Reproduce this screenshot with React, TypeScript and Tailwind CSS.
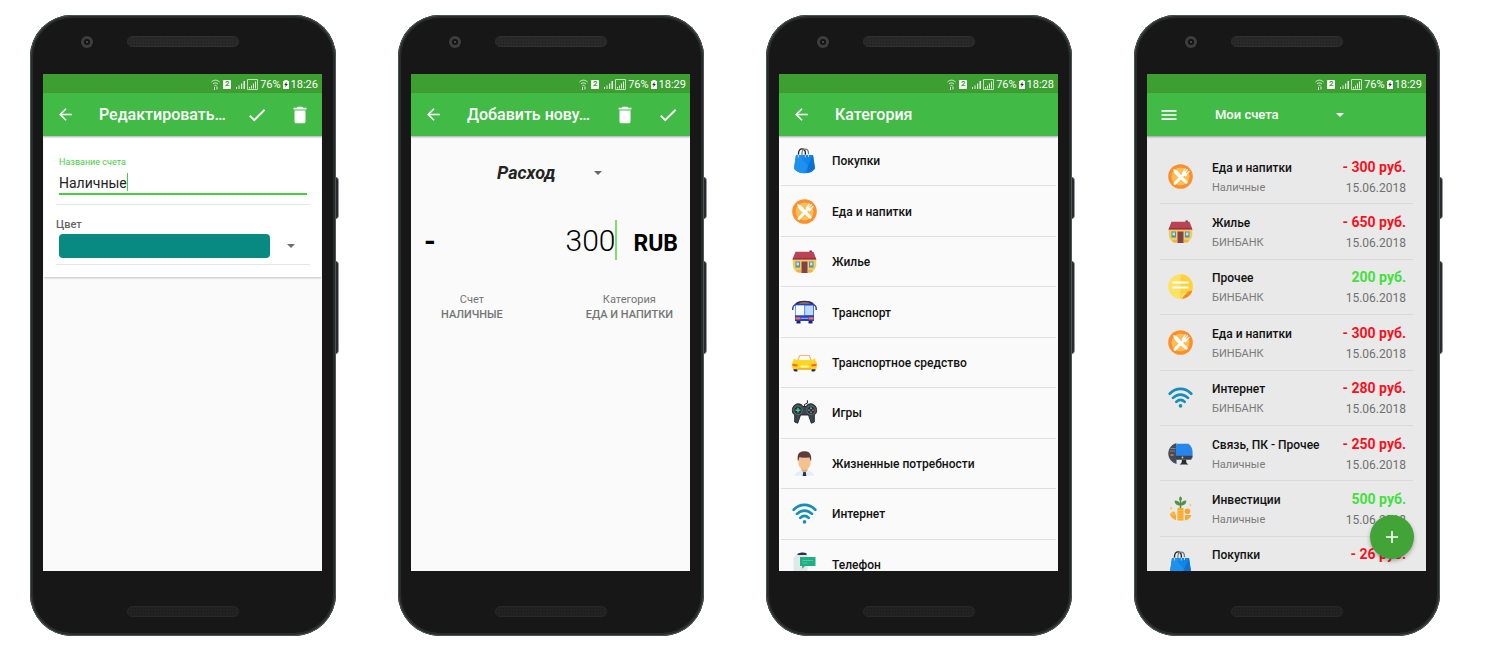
import React from "react";

type IconName =
  | "bag" | "food" | "house" | "bus" | "car" | "gamepad"
  | "person" | "wifi" | "phone" | "note" | "computer" | "invest";

const art: Record<IconName, React.ReactNode> = {
  bag: (
    <>
      <path d="M6.500 9V5.500C6.500 2.500 8 .9 10 .9s3.400 1.600 3.400 4.600V9" fill="none" stroke="#1b2026" strokeWidth="1.300" />
      <path d="M10 8V4.500C10.200 2.500 11.500 1.200 13.200 1.200c2 0 3.300 1.600 3.300 4.300V8" fill="none" stroke="#6e7b86" strokeWidth="1.200" />
      <path d="M4 7h17l2 13.500c-2.500 3.500-6.500 4.800-10.500 4.800S4.500 24 2 20.500z" fill="#0f86e8" />
      <path d="M4 7h8l-2 4 6 7-4 7.300C8 25.200 4.500 23.800 2 20.500z" fill="#1e90ee" />
      <path d="M16 18l5-11 2 13.500c-2 2.800-5 4.200-8 4.600z" fill="#0a72d2" />
      <path d="M6.500 6.500v3M13.300 6.500v3M16.500 6v3" stroke="#c9d3da" strokeWidth="1" />
    </>
  ),
  food: (
    <>
      <circle cx="12.500" cy="12.500" r="12.300" fill="#fd8f2d" />
      <circle cx="12.500" cy="12.500" r="9" fill="#fdbe55" />
      <path d="M5.400 5c2.800.4 5.400 2.800 7.200 5.400l6.900 7.200c1 1.100-.9 2.800-2 1.800l-7.400-6.300C7.800 11 5.200 8 5.400 5z" fill="#fff" />
      <path d="M15.500 10.200l3.800-4.600M17.400 11.300l3.700-3.900M14.600 9.300l2.600-4.500" stroke="#fff" strokeLinecap="round" fill="none" strokeWidth="1.200" />
      <path d="M6.900 19.500l8.100-8.500" stroke="#fff" strokeWidth="2.800" strokeLinecap="round" />
      <path d="M13.800 8.800l3.400 3.800 2.400-1.700-3.600-4z" fill="#fff" />
    </>
  ),
  house: (
    <>
      <path d="M17.500 1.500h2.400v3h-2.400z" fill="#4d3c4e" />
      <path d="M.8 10h23.400v6.500c-.8 3.500-3 6-5.500 7.500H6.300C3.500 22.500 1.400 20 .8 16.500z" fill="#f3cb57" />
      <path d="M3.500 2.800h18l3 8H.3z" fill="#b84457" />
      <path d="M1 9.400h23" stroke="#963247" strokeWidth="1" />
      <path d="M9.500 12.500h6V24h-6z" fill="#83404d" />
      <path d="M3.500 12.500h4.500v6H3.500zM17 12.500h4.500v6H17z" fill="#4f91ac" />
      <path d="M4.500 13.500h2.500v3H4.500zM18 13.500h2.500v3H18z" fill="#bce6f2" />
      <path d="M4.500 22h5M15.500 22h5" stroke="#df9a57" strokeWidth="1.200" />
    </>
  ),
  bus: (
    <>
      <path d="M4 4.500C1.300 5 .7 6.300.7 10M21 4.500c2.700.5 3.300 1.800 3.300 5.500" fill="none" stroke="#29429d" strokeWidth="1.500" />
      <path d="M4.500 19h4v4.500h-4zM16.500 19h4v4.500h-4z" fill="#1b2467" />
      <path d="M3 4C4.500 1.800 8 1 12.500 1s8 .8 9.500 3v17H3z" fill="#293ebd" />
      <path d="M3.500 4C5 1.500 8 .8 12.500.8S20 1.500 21.500 4z" fill="#252f6a" />
      <path d="M6 3.500C8 2 17 2 19 3.500z" fill="#e5a342" />
      <path d="M3.700 5.500h17.600v9.700H3.700z" fill="#b9dcff" />
      <path d="M3.700 5.500h8.300v9.700H3.700z" fill="#f2f8ff" />
      <path d="M12.700 5.500v9.700" stroke="#4b75d2" strokeWidth=".8" />
      <path d="M3.500 17.300h5v2.200h-5zM16.500 17.300h5v2.200h-5z" fill="#ff7146" />
      <path d="M9 18.300h7" stroke="#8db5fa" strokeWidth="1.200" />
    </>
  ),
  car: (
    <>
      <path d="M5.500 11l2.200-5.500h9.600l2.200 5.500z" fill="#fff9ed" stroke="#f4b583" strokeWidth="1.200" />
      <path d="M1.500 17h4v4.300c-2 .6-3.500.1-4-1zM19.500 17h4v3.300c-.5 1.100-2 1.600-4 1z" fill="#222763" />
      <path d="M1.800 8.200l3 2h15.400l3-2 .2 2.400c1 .8 1.400 2 1.400 3.500v4.200l-1.300.9H1.500l-1.300-.9v-4.200c0-1.500.4-2.700 1.400-3.500z" fill="#fed61b" />
      <path d="M.4 13.800l5.300.8-.3 2-4.900-.5zM24.600 13.800l-5.300.8.300 2 4.900-.5z" fill="#ff5e43" />
      <path d="M8.500 15.500h8v2h-8z" fill="#fff6b0" />
      <path d="M6 19h13" stroke="#e9a514" strokeWidth="1.300" />
    </>
  ),
  gamepad: (
    <>
      <path d="M12.400 7V4.500l3-1.300V.3" fill="none" stroke="#1d242a" strokeWidth="1" />
      <path d="M6 3.800c2.300-.2 4.300 1.200 5 2.700h3c.7-1.500 2.700-2.900 5-2.700 3.600.3 5.800 3.200 5.600 7-.1 2-.8 3.200-2.300 4.200v7l-3 1.200-2.800-8.200h-8l-2.800 8.200-3-1.200v-7C1.200 14 .5 12.800.4 10.800.2 7 2.400 4.100 6 3.800z" fill="#3b454f" stroke="#1b2127" strokeWidth=".9" />
      <circle cx="6" cy="10.200" r="4.200" fill="#252e36" stroke="#798690" strokeWidth=".7" />
      <circle cx="19" cy="10.200" r="4.200" fill="#252e36" stroke="#798690" strokeWidth=".7" />
      <path d="M6 7.800v4.800M3.600 10.200h4.800" stroke="#3fd37f" strokeWidth="1.500" />
      <circle cx="19" cy="8.200" r=".9" fill="#5bd58a" />
      <circle cx="17" cy="10.200" r=".9" fill="#4e9de2" />
      <circle cx="21" cy="10.200" r=".9" fill="#ef5a51" />
      <circle cx="19" cy="12.200" r=".9" fill="#c9822f" />
    </>
  ),
  person: (
    <>
      <path d="M9.500 16h6v5l-3 2-3-2z" fill="#e0aa72" />
      <path d="M2.500 24.800c.7-3 3.500-4.500 7-5l3 2.200 3-2.200c3.500.5 6.300 2 7 5z" fill="#e6ecf8" />
      <path d="M11.300 21h2.400l.7 4h-3.800z" fill="#263457" />
      <path d="M6.500 7h12v5.500c0 3.500-3.300 6.500-6 6.500s-6-3-6-6.500z" fill="#f4c38d" />
      <path d="M6 10.500C5 5 5.800.5 12 .3c6.500-.5 8 4.700 7 10.200l-1.500-4c-3.500.5-7.500.5-10-.3z" fill="#5f3b3a" />
    </>
  ),
  wifi: (
    <g fill="none" stroke="#188dbc" strokeWidth="2.700" strokeLinecap="round">
      <path d="M1.700 8.700C8 2.300 17 2.300 23.300 8.700M5 12.900c4.400-4.500 10.600-4.500 15 0M8.300 16.900c2.600-2.600 5.800-2.600 8.400 0" />
      <circle cx="12.500" cy="20.900" r="1.800" fill="#188dbc" stroke="none" />
    </g>
  ),
  phone: (
    <>
      <path d="M1.500 5.500l4-3.500h10v23h-14z" fill="#e2e7ea" />
      <path d="M5.500 2C7.500.3 12 0 14.500 1.200V3h-9z" fill="#27334e" />
      <path d="M8 5h15.500v9H13l-2.800 2.700V14H8z" fill="#1eaf83" />
      <path d="M10.500 8.500h10.500M10.500 11h5" stroke="#55c9a2" strokeWidth="1" />
    </>
  ),
  note: (
    <>
      <circle cx="12.500" cy="12.500" r="12.300" fill="#ffe164" />
      <path d="M12.500.2a12.300 12.300 0 0 1 11.800 15.700l-7.200 8a12.300 12.300 0 0 1-4.600.9z" fill="#ffd13b" />
      <path d="M14 24.700c.5-4.500 4-7.700 10.300-8.300-1.200 4.500-5 8-10.300 8.300z" fill="#f78a15" />
      <path d="M14 24.500c-.5-3 .2-4.500 2.500-5.500 1.500-.6 5.500-.8 7.800-2.600-4.500 1.100-7.800 4.100-10.300 8.100z" fill="#ffe88a" />
      <path d="M4.500 8.500h16M4.500 13.500h16" stroke="#fff" strokeWidth="2.200" />
    </>
  ),
  computer: (
    <>
      <path d="M8.500 2v21C3.500 21.500.3 17.500.3 12.500S3.500 3.500 8.500 2z" fill="#414b59" />
      <path d="M2.500 7.500h5M1.700 10h5.500" stroke="#7b8897" strokeWidth="1" />
      <path d="M2.500 14h3" stroke="#ef782f" strokeWidth="1.500" />
      <path d="M9.500 2.800h11c2.700 2 4.100 5 4.100 8.700v5.500H8V4.300z" fill="#2786ed" />
      <path d="M8 14.700h16.400c-.2 1.500-.6 2.800-1.200 4H9c-.7 0-1-.4-1-1z" fill="#384350" />
      <path d="M14 18.700h4l.5 3.300 2 1.500h-9l2-1.500z" fill="#242c36" />
      <circle cx="14.500" cy="16.500" r=".9" fill="#f5cf45" />
    </>
  ),
  invest: (
    <>
      <path d="M12.500 12V5" stroke="#4b8b43" strokeWidth="1.500" />
      <path d="M12.500 9.500C8.500 9.500 6.500 7.500 6.700 4.500c3.500 0 5.500 1.500 5.800 5zM12.500 9.500c4 0 6-2 5.800-5-3.500 0-5.500 1.500-5.800 5zM12.500 5.500c-2-1.500-2-3.500 0-5.200 2 1.700 2 3.700 0 5.200z" fill="#4f9344" />
      <path d="M9.500 12h6v12.500h-6zM17 19h6.500c-.8 2.500-3 5-6.500 5.500zM1.800 17.500l6.200 1.300v5.500C4.700 23 2.300 20.500 1.800 17.500z" fill="#faa92a" />
      <circle cx="19.500" cy="15.300" r="2.800" fill="#f9a62a" />
      <circle cx="5.300" cy="17.600" r="2.200" fill="#fcb63d" />
      <path d="M9 14.500h7M9 17.200h7M9 19.900h7M9 22.500h7" stroke="#fdc45c" strokeWidth=".7" />
      <path d="M2 12.500l1-2 1 2-1 1zM21.500 9l1-1.500 1 1.500-1 1z" fill="#fcc04b" />
    </>
  ),
};

function CategoryIcon({ name }: { name: IconName }) {
  return (
    <svg viewBox="0 0 25 25" className="size-[25px] shrink-0 overflow-visible" aria-hidden="true">
      {art[name]}
    </svg>
  );
}

function Glyph({ d, className }: { d: string; className: string }) {
  return (
    <svg viewBox="0 0 24 24" fill="currentColor" className={className} aria-hidden="true">
      <path d={d} />
    </svg>
  );
}

const BACK = "M20 11H7.830l5.590-5.590L12 4l-8 8 8 8 1.410-1.410L7.830 13H20v-2z";
const CHECK = "M9 16.170L4.830 12l-1.420 1.410L9 19 21 7l-1.410-1.410z";
const TRASH = "M6 19c0 1.100.9 2 2 2h8c1.100 0 2-.9 2-2V7H6v12zM19 4h-3.500l-1-1h-5l-1 1H5v2h14V4z";
const MENU = "M3 18h18v-2H3v2zm0-5h18v-2H3v2zm0-7v2h18V6H3z";

function Caret({ className }: { className: string }) {
  return (
    <svg viewBox="0 0 8 4" fill="currentColor" className={`pointer-events-none h-1 w-2 shrink-0 ${className}`} aria-hidden="true">
      <path d="M0 0h8L4 4z" />
    </svg>
  );
}

function StatusBar({ time }: { time: string }) {
  return (
    <div className="flex h-[19px] shrink-0 items-center justify-end bg-[#3d9f32] pr-1 pt-px text-[11px] leading-none text-white">
      <svg viewBox="0 0 9 11" className="mr-[3px] h-[11px] w-[9px]" fill="none" stroke="#dff2db" aria-hidden="true">
        <path d="M.5 3c2.500-2.400 5.500-2.400 8 0M2 5c1.600-1.500 3.400-1.500 5 0M3.400 6.800c.7-.6 1.500-.6 2.200 0" />
        <path d="M3.500 11V8M6 7.500v3" />
      </svg>
      <span className="mr-[5px] flex h-[9px] w-2 items-center justify-center rounded-[1px] bg-white text-[8px] font-bold text-[#3d9f32]">2</span>
      <svg viewBox="0 0 22 11" className="mr-0.5 h-[11px] w-[22px]" aria-hidden="true">
        <path d="M0 8h1v2H0zM2.500 6.500h1V10h-1zM5 4.500h1.200V10H5zM7.500 2h1.500v8H7.500z" fill="#e6f5e3" />
        <path d="M11.500.5h10v10h-10z" fill="none" stroke="#bfe2b9" />
        <path d="M13 8h1v1.500h-1zM15 6.500h1v3h-1zM17 4.500h1v5h-1zM19 2.500h1v7h-1z" fill="#e6f5e3" />
      </svg>
      <span>76%</span>
      <svg viewBox="0 0 6 9" className="mx-0.5 h-[9px] w-1.5" aria-hidden="true">
        <path d="M1.500 0h3v1H6v8H0V1h1.500z" fill="#fff" />
        <path d="M3.700 1.800L1.200 5h1.500l-.5 2.500L4.800 4H3.300z" fill="#1c3517" />
      </svg>
      <span>{time}</span>
    </div>
  );
}

function AppBar({ title, actions = [] }: { title: string; actions?: ("check" | "trash")[] }) {
  return (
    <header className="relative z-10 flex h-[43px] shrink-0 items-center bg-[#42bb46] pl-[13px] pr-[11px] text-white shadow-[0_1px_2px_rgba(0,0,0,0.35)]">
      <button type="button" aria-label="Назад">
        <Glyph d={BACK} className="size-[19px]" />
      </button>
      <h1 className="ml-6 min-w-0 flex-1 whitespace-nowrap pt-px text-base font-medium">{title}</h1>
      <div className="flex shrink-0 gap-[21px]">
        {actions.map((a) => (
          <button key={a} type="button" aria-label={a === "check" ? "Сохранить" : "Удалить"}>
            <Glyph d={a === "check" ? CHECK : TRASH} className="size-[22px]" />
          </button>
        ))}
      </div>
    </header>
  );
}

function Phone({ time, children }: { time: string; children: React.ReactNode }) {
  return (
    <section className="relative">
      <span className="absolute -right-[3px] top-[162px] h-[42px] w-2 rounded-r-sm border-r border-[#8b9ba2] bg-[#2d292b]" />
      <span className="absolute -right-[3px] top-[246px] h-[93px] w-2 rounded-r-sm border-r border-[#8b9ba2] bg-[#2d292b]" />
      <div className="relative rounded-[42px] bg-[#171717] pl-[13px] pr-[14px] shadow-[inset_0_0_0_1px_#4b5654,inset_0_0_0_3px_#292b29]">
        <div className="grid h-[59px] grid-cols-[1fr_auto_1fr] pt-[21px]">
          <span className="ml-[38px] flex size-3 items-center justify-center rounded-full bg-[#3d3d3d]">
            <span className="flex size-1.5 items-center justify-center rounded-full bg-[#141417]">
              <span className="size-0.5 rounded-full bg-[#5b5165]" />
            </span>
          </span>
          <span className="h-[11px] w-28 rounded-full border border-[#303030] bg-[#292929] bg-[radial-gradient(#1e1e1e_1px,transparent_1px)] bg-[length:3px_3px]" />
        </div>
        <div className="relative flex aspect-[279/497] flex-col overflow-hidden bg-[#fafafa]">
          <StatusBar time={time} />
          {children}
        </div>
        <div className="flex h-[65px] justify-center pt-[35px]">
          <span className="h-[11px] w-28 rounded-full border border-[#292929] bg-[#222] bg-[radial-gradient(#1a1a1a_1px,transparent_1px)] bg-[length:3px_3px]" />
        </div>
      </div>
    </section>
  );
}

function EditAccount() {
  return (
    <Phone time="18:26">
      <AppBar title="Редактировать…" actions={["check", "trash"]} />
      <form className="mx-px border-b border-[#d4d4d4] bg-white pb-3 pl-3 pr-[11px] pt-[21px] shadow-[0_1px_1px_rgba(0,0,0,0.08)]">
        <div className="border-b border-[#e6e6e6] px-[3px] pb-[9px]">
          <label htmlFor="account" className="block text-[9px] leading-[10px] text-[#4bce45]">Название счета</label>
          <div className="mt-1.5 flex h-[22px] border-b-2 border-[#45d03e]">
            <input id="account" defaultValue="Наличные" className="h-5 field-sizing-content bg-transparent text-sm text-[#212121] outline-none" />
            <span className="h-[18px] w-px bg-[#45d03e]" />
          </div>
        </div>
        <div className="border-b border-[#e6e6e6] pb-1.5 pt-3">
          <label htmlFor="color" className="block text-[11px] font-medium leading-4 text-[#666]">Цвет</label>
          <div className="mt-px flex items-center pl-[3px] pr-[15px]">
            <select id="color" className="h-6 min-w-0 flex-1 appearance-none rounded bg-[#088a83] outline-none">
              <option value="#088a83"></option>
            </select>
            <Caret className="ml-[17px] text-[#6f6f6f]" />
          </div>
        </div>
      </form>
    </Phone>
  );
}

function AddEntry() {
  return (
    <Phone time="18:29">
      <AppBar title="Добавить нову…" actions={["trash", "check"]} />
      <div className="flex flex-col">
        <div className="mt-[25px] flex items-center justify-center pr-0.5">
          <select aria-label="Тип операции" className="w-[97px] appearance-none bg-transparent text-lg font-bold italic leading-6 text-[#242424] outline-none">
            <option>Расход</option>
          </select>
          <Caret className="text-[#666]" />
        </div>
        <div className="mt-[34px] flex h-[42px] items-center pl-[13px] pr-3 text-black">
          <span className="pt-0.5 text-3xl font-bold leading-none">-</span>
          <span className="flex flex-1 items-center justify-end">
            <input aria-label="Сумма" defaultValue="300" className="field-sizing-content bg-transparent pt-0.5 text-[30px] font-light leading-10 outline-none" />
            <span className="h-10 w-0.5 bg-[#7ddd6e]" />
          </span>
          <span className="ml-4 pt-2 text-[23px] font-bold leading-8">RUB</span>
        </div>
        <div className="mt-[31px] flex justify-between pl-[30px] pr-[17px] text-center text-[11px] leading-[15px] text-[#757575]">
          <button type="button">
            Счет
            <span className="block font-medium">НАЛИЧНЫЕ</span>
          </button>
          <button type="button">
            Категория
            <span className="block font-medium">ЕДА И НАПИТКИ</span>
          </button>
        </div>
      </div>
    </Phone>
  );
}

const categories: [IconName, string][] = [
  ["bag", "Покупки"],
  ["food", "Еда и напитки"],
  ["house", "Жилье"],
  ["bus", "Транспорт"],
  ["car", "Транспортное средство"],
  ["gamepad", "Игры"],
  ["person", "Жизненные потребности"],
  ["wifi", "Интернет"],
  ["phone", "Телефон"],
];

function Categories() {
  return (
    <Phone time="18:28">
      <AppBar title="Категория" />
      <ul className="grid h-[454px] shrink-0 auto-rows-fr">
        {categories.map(([icon, name]) => (
          <li key={name} className="mx-0.5 flex items-center gap-[15px] border-b border-[#dedede] pl-[11px] text-xs font-medium text-[#111]">
            <CategoryIcon name={icon} />
            <span className="pt-px">{name}</span>
          </li>
        ))}
      </ul>
    </Phone>
  );
}

type Entry = { icon: IconName; name: string; sum: string; account?: string; date?: string };

const entries: Entry[] = [
  { icon: "food", name: "Еда и напитки", sum: "- 300 руб.", account: "Наличные", date: "15.06.2018" },
  { icon: "house", name: "Жилье", sum: "- 650 руб.", account: "БИНБАНК", date: "15.06.2018" },
  { icon: "note", name: "Прочее", sum: "200 руб.", account: "БИНБАНК", date: "15.06.2018" },
  { icon: "food", name: "Еда и напитки", sum: "- 300 руб.", account: "БИНБАНК", date: "15.06.2018" },
  { icon: "wifi", name: "Интернет", sum: "- 280 руб.", account: "БИНБАНК", date: "15.06.2018" },
  { icon: "computer", name: "Связь, ПК - Прочее", sum: "- 250 руб.", account: "Наличные", date: "15.06.2018" },
  { icon: "invest", name: "Инвестиции", sum: "500 руб.", account: "Наличные", date: "15.06.2018" },
  { icon: "bag", name: "Покупки", sum: "- 26 руб." },
];

function Accounts() {
  return (
    <Phone time="18:29">
      <header className="relative z-10 flex h-[43px] shrink-0 items-center bg-[#42bb46] pl-3 text-white shadow-[0_1px_2px_rgba(0,0,0,0.35)]">
        <button type="button" aria-label="Меню">
          <Glyph d={MENU} className="size-5" />
        </button>
        <select aria-label="Счет" className="ml-9 w-[121px] appearance-none bg-transparent text-[13px] font-medium text-white outline-none">
          <option>Мои счета</option>
        </select>
        <Caret className="text-white" />
      </header>
      <div className="min-h-0 flex-1 bg-[#e9e9e9] px-[13px] pt-[13px]">
        <ul className="grid h-[443px] auto-rows-fr">
          {entries.map(({ icon, name, sum, account, date }, i) => (
            <li key={i} className="flex items-center border-b border-[#dadada] pl-2 pr-[7px]">
              <CategoryIcon name={icon} />
              <div className="ml-[19px] flex-1 whitespace-nowrap pt-[3px]">
                <p className="text-xs font-medium leading-5 text-[#111]">{name}</p>
                <p className="h-5 text-[11px] leading-5 text-[#7b7b7b]">{account}</p>
              </div>
              <div className="whitespace-nowrap pt-[3px] text-right">
                <p className={`text-sm font-bold leading-5 ${sum.startsWith("-") ? "text-[#f5121d]" : "text-[#43df3d]"}`}>{sum}</p>
                <p className="h-[22px] text-xs leading-[22px] text-[#707070]">{date}</p>
              </div>
            </li>
          ))}
        </ul>
      </div>
      <button type="button" aria-label="Добавить" className="absolute bottom-3 right-3 z-20 flex size-11 items-center justify-center rounded-full bg-[#42a336] shadow-[0_2px_4px_rgba(0,0,0,0.3)]">
        <svg viewBox="0 0 12 12" className="size-3" stroke="#fff" strokeWidth="1.600" aria-hidden="true">
          <path d="M6 0v12M0 6h12" />
        </svg>
      </button>
    </Phone>
  );
}

export default function App() {
  return (
    <main className="grid min-h-screen grid-cols-[repeat(auto-fit,minmax(290px,1fr))] content-start gap-[62px] bg-white pb-[19px] pl-[30px] pr-[46px] pt-[15px] font-['Roboto',sans-serif]">
      <EditAccount />
      <AddEntry />
      <Categories />
      <Accounts />
    </main>
  );
}
